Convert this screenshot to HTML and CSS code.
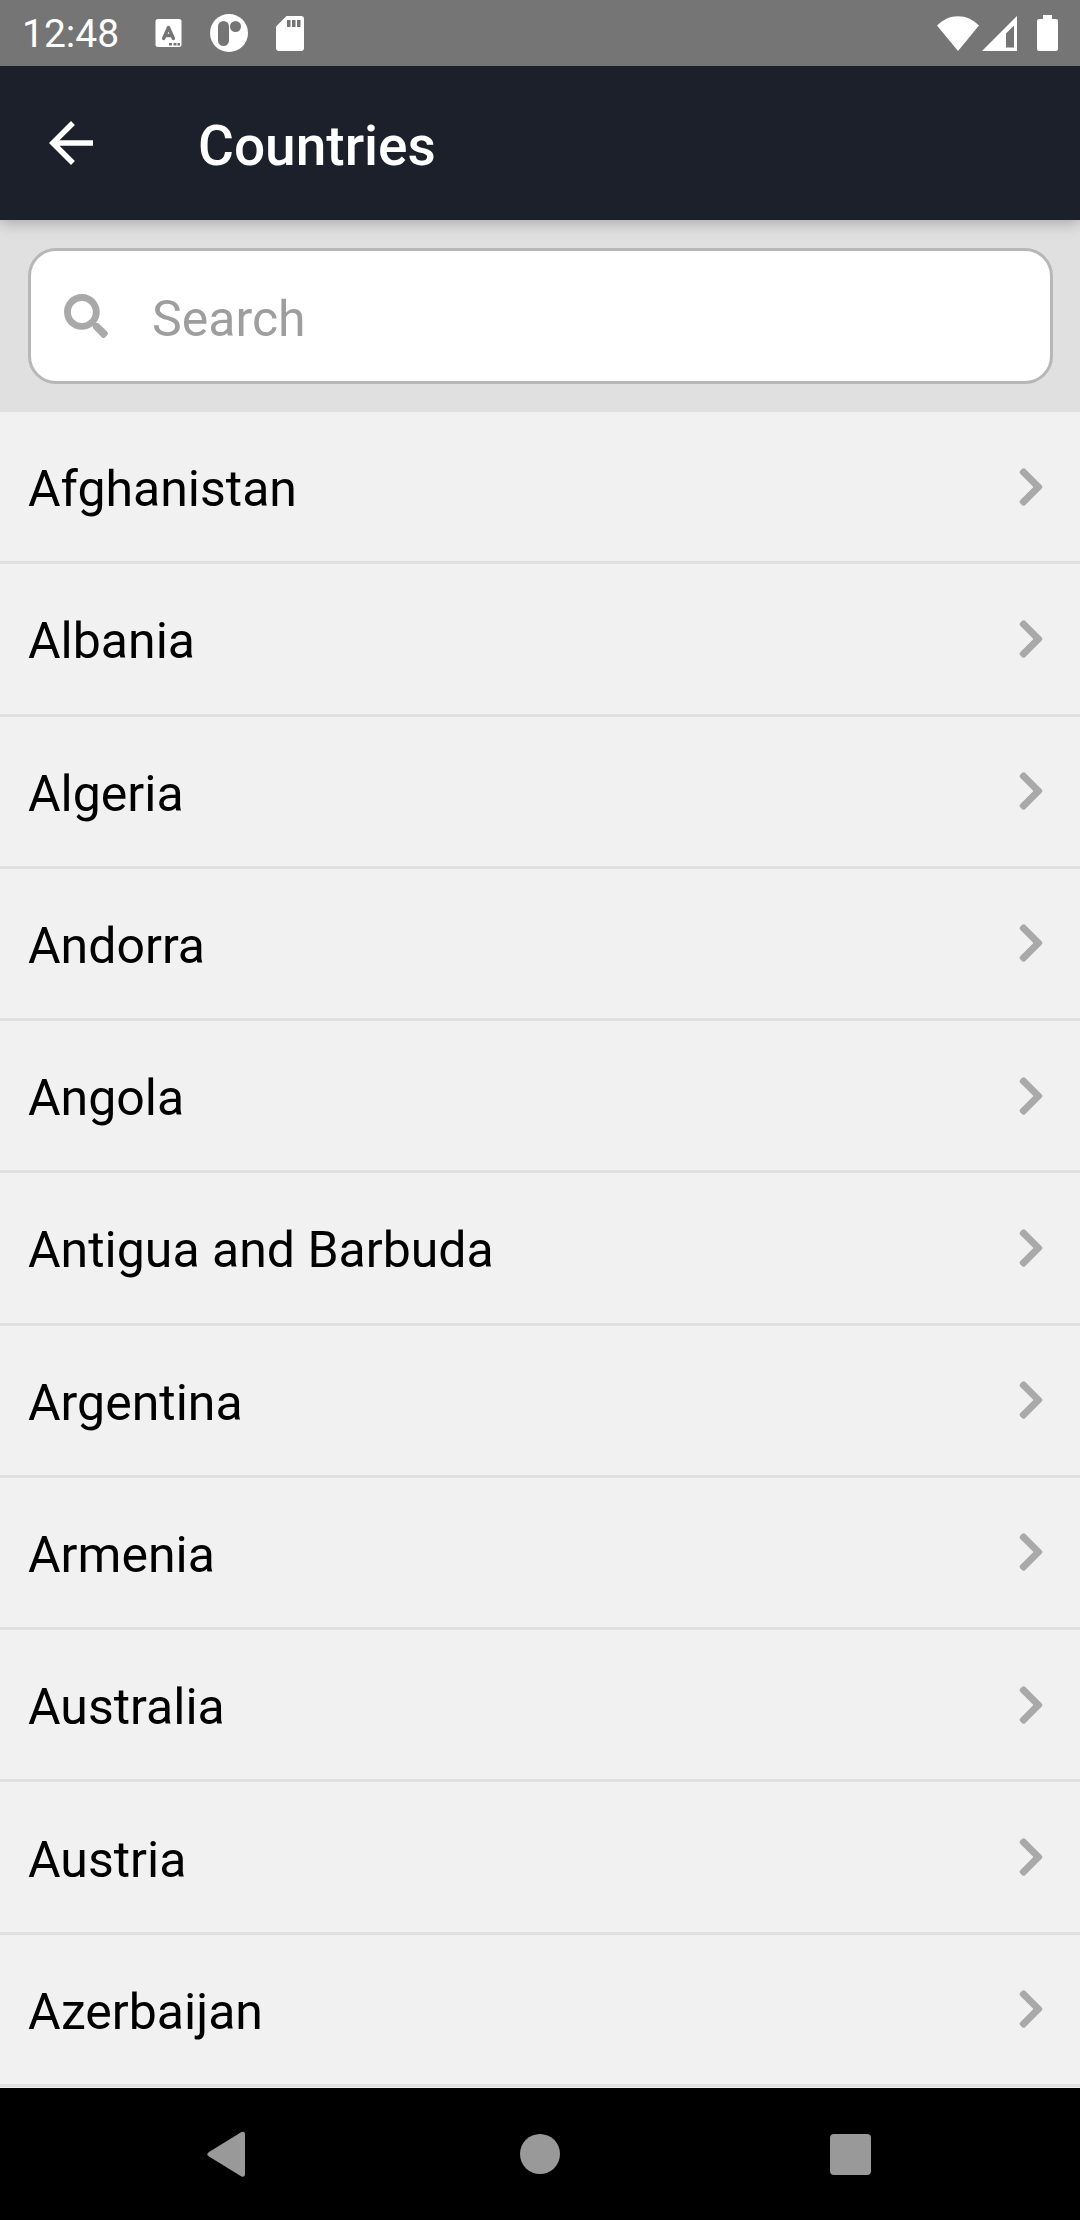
FILE: index.html
```html
<!DOCTYPE html>
<html lang="en">
<head>
<meta charset="utf-8">
<meta name="viewport" content="width=device-width, initial-scale=1">
<title>Countries</title>
<link rel="stylesheet" href="styles.css">
</head>
<body>
<svg class="sprite" aria-hidden="true">
  <symbol id="chevron" viewBox="0 0 320 512"><path d="M285.476 272.971L91.132 467.314c-9.373 9.373-24.569 9.373-33.941 0l-22.667-22.667c-9.357-9.357-9.375-24.522-.04-33.901L188.505 256 34.484 101.255c-9.335-9.379-9.317-24.544.04-33.901l22.667-22.667c9.373-9.373 24.569-9.373 33.941 0L285.475 239.03c9.373 9.372 9.373 24.568.001 33.941z"/></symbol>
</svg>
<div class="screen">
  <div class="status-bar">
    <span class="clock">12:48</span>
    <div class="notifications">
      <svg width="27" height="28" viewBox="0 0 27 28"><rect x=".5" width="26" height="28" rx="2.5" fill="#fff"/><path d="M8.600 19.500 L13.500 8.500 L18.400 19.500 M10.200 16.500 H16.800" fill="none" stroke="#757575" stroke-width="3.400" stroke-linecap="round" stroke-linejoin="round"/><path d="M14 24h3v2.500h-3zM18.500 24h3v2.500h-3zM22.500 24h2.500v2.500h-2.500z" fill="#757575"/></svg>
      <svg width="38" height="38" viewBox="0 0 38 38"><circle cx="19" cy="19" r="19" fill="#fff"/><rect x="8" y="7" width="11" height="25" rx="5.500" fill="#757575"/><circle cx="25.500" cy="12.500" r="5.500" fill="#757575"/></svg>
      <svg width="28" height="35" viewBox="0 0 28 35"><path d="M10.500 0H25a3 3 0 0 1 3 3v29a3 3 0 0 1-3 3H3a3 3 0 0 1-3-3V10.500z" fill="#fff"/><path d="M11 4h3.500v7H11zM16 4h3.500v7H16zM21 4h3.500v7H21z" fill="#757575"/></svg>
    </div>
    <div class="system">
      <svg width="42" height="35" viewBox="0 0 42 35"><path d="M0 9.500C12-3 30-3 42 9.500L21 35z" fill="#fff"/></svg>
      <svg width="35" height="35" viewBox="0 0 35 35"><path fill-rule="evenodd" d="M35 0v35H0zM32 9.500 24 17.500V31.500h8z" fill="#fff"/></svg>
      <svg class="battery" width="21" height="36" viewBox="0 0 21 36"><path d="M6 0h9v4h4a2 2 0 0 1 2 2v28a2 2 0 0 1-2 2H2a2 2 0 0 1-2-2V6a2 2 0 0 1 2-2h4z" fill="#fff"/></svg>
    </div>
  </div>
  <header class="app-bar">
    <button class="back" type="button" aria-label="Back"><svg width="66" height="66" viewBox="0 0 24 24"><path d="M20 11H7.830l5.590-5.590L12 4l-8 8 8 8 1.410-1.410L7.830 13H20v-2z" fill="#fff"/></svg></button>
    <h1 class="title">Countries</h1>
  </header>
  <form class="search" role="search">
    <label class="search-box">
      <svg width="44" height="44" viewBox="0 0 512 512" role="img" aria-label="Search"><path fill="#a9a9a9" d="M505 442.700L405.300 343c-4.500-4.500-10.600-7-17-7H372c27.600-35.300 44-79.700 44-128C416 93.100 322.900 0 208 0S0 93.100 0 208s93.100 208 208 208c48.300 0 92.700-16.400 128-44v16.300c0 6.400 2.500 12.500 7 17l99.700 99.700c9.400 9.400 24.600 9.400 33.900 0l28.300-28.300c9.400-9.400 9.400-24.600.1-34zM208 336c-70.700 0-128-57.200-128-128 0-70.700 57.200-128 128-128 70.700 0 128 57.200 128 128 0 70.700-57.200 128-128 128z"/></svg>
      <input class="search-input" type="text" placeholder="Search">
    </label>
  </form>
  <ul class="list">
    <li class="item"><a class="row" href="#afghanistan"><span class="name">Afghanistan</span><svg class="chevron"><use href="#chevron"/></svg></a></li>
    <li class="item"><a class="row" href="#albania"><span class="name">Albania</span><svg class="chevron"><use href="#chevron"/></svg></a></li>
    <li class="item"><a class="row" href="#algeria"><span class="name">Algeria</span><svg class="chevron"><use href="#chevron"/></svg></a></li>
    <li class="item"><a class="row" href="#andorra"><span class="name">Andorra</span><svg class="chevron"><use href="#chevron"/></svg></a></li>
    <li class="item"><a class="row" href="#angola"><span class="name">Angola</span><svg class="chevron"><use href="#chevron"/></svg></a></li>
    <li class="item"><a class="row" href="#antigua-and-barbuda"><span class="name">Antigua and Barbuda</span><svg class="chevron"><use href="#chevron"/></svg></a></li>
    <li class="item"><a class="row" href="#argentina"><span class="name">Argentina</span><svg class="chevron"><use href="#chevron"/></svg></a></li>
    <li class="item"><a class="row" href="#armenia"><span class="name">Armenia</span><svg class="chevron"><use href="#chevron"/></svg></a></li>
    <li class="item"><a class="row" href="#australia"><span class="name">Australia</span><svg class="chevron"><use href="#chevron"/></svg></a></li>
    <li class="item"><a class="row" href="#austria"><span class="name">Austria</span><svg class="chevron"><use href="#chevron"/></svg></a></li>
    <li class="item"><a class="row" href="#azerbaijan"><span class="name">Azerbaijan</span><svg class="chevron"><use href="#chevron"/></svg></a></li>
  </ul>
  <nav class="nav-bar" aria-label="System">
    <button class="nav-button" type="button" aria-label="Back"><svg width="48" height="48" viewBox="0 0 48 48"><path d="M4 26.500 36.500 46.500Q40 47.500 40 44V4.500Q40 1 36.500 2L4 22Q.5 24.300 4 26.500z" fill="#999"/></svg></button>
    <button class="nav-button" type="button" aria-label="Home"><svg width="48" height="48" viewBox="0 0 48 48"><circle cx="24" cy="24" r="20" fill="#999"/></svg></button>
    <button class="nav-button" type="button" aria-label="Recent apps"><svg width="48" height="48" viewBox="0 0 48 48"><rect x="3" y="4" width="41" height="41" rx="4" fill="#999"/></svg></button>
  </nav>
</div>
</body>
</html>
```
FILE: styles.css
```css
* {
  box-sizing: border-box;
}

body {
  margin: 0;
  background: #f1f1f1;
  color: #000;
  font-family: Roboto, "Liberation Sans", sans-serif;
  font-size: 50px;
}

svg {
  display: block;
  flex: none;
}

button {
  padding: 0;
  border: 0;
  background: none;
}

.sprite {
  position: absolute;
  width: 0;
  height: 0;
}

.screen {
  display: flex;
  flex-direction: column;
  min-height: 100vh;
}

.status-bar {
  position: relative;
  z-index: 2;
  display: flex;
  align-items: center;
  gap: 28px;
  height: 66px;
  padding: 0 22px;
  background: #757575;
  color: #fff;
}

.clock {
  width: 105px;
  padding-top: 2px;
  font-size: 39px;
  line-height: 46px;
}

.notifications {
  display: flex;
  align-items: center;
  gap: 28px;
}

.system {
  display: flex;
  align-items: center;
  gap: 3px;
  margin-left: auto;
}

.battery {
  margin-left: 17px;
}

.app-bar {
  position: relative;
  z-index: 1;
  display: flex;
  align-items: center;
  gap: 94px;
  height: 154px;
  padding: 0 38px;
  background: #1c202b;
  box-shadow: 0 3px 14px rgba(0, 0, 0, 0.25);
  color: #fff;
}

.title {
  margin: 0;
  padding-top: 6px;
  font-size: 55px;
  font-weight: 500;
  line-height: 64px;
}

.search {
  padding: 28px 27px 28px 28px;
  background: #e0e0e0;
}

.search-box {
  display: flex;
  align-items: center;
  gap: 44px;
  height: 136px;
  padding: 0 33px;
  border: 3px solid #b7b7b7;
  border-radius: 28px;
  background: #fff;
}

.search-input {
  flex: 1;
  min-width: 0;
  padding: 5px 0 0;
  border: 0;
  outline: 0;
  background: none;
  color: #000;
  font: inherit;
}

.search-input::placeholder {
  color: #9e9e9e;
}

.list {
  display: flex;
  flex: 1;
  flex-direction: column;
  margin: 0;
  padding: 0 0 1px;
  list-style: none;
}

.item {
  display: flex;
  flex: 1;
  border-bottom: 3px solid #e0e0e0;
}

.row {
  display: flex;
  flex: 1;
  align-items: center;
  justify-content: space-between;
  padding: 0 35px 0 28px;
  color: inherit;
  text-decoration: none;
}

.name {
  padding-top: 5px;
  line-height: 60px;
}

.chevron {
  width: 28px;
  height: 44px;
  fill: #a9a9a9;
}

.nav-bar {
  display: grid;
  grid-template-columns: repeat(3, 1fr);
  height: 132px;
  padding: 0 73px;
  background: #000;
}

.nav-button {
  display: flex;
  align-items: center;
  justify-content: center;
}
```
